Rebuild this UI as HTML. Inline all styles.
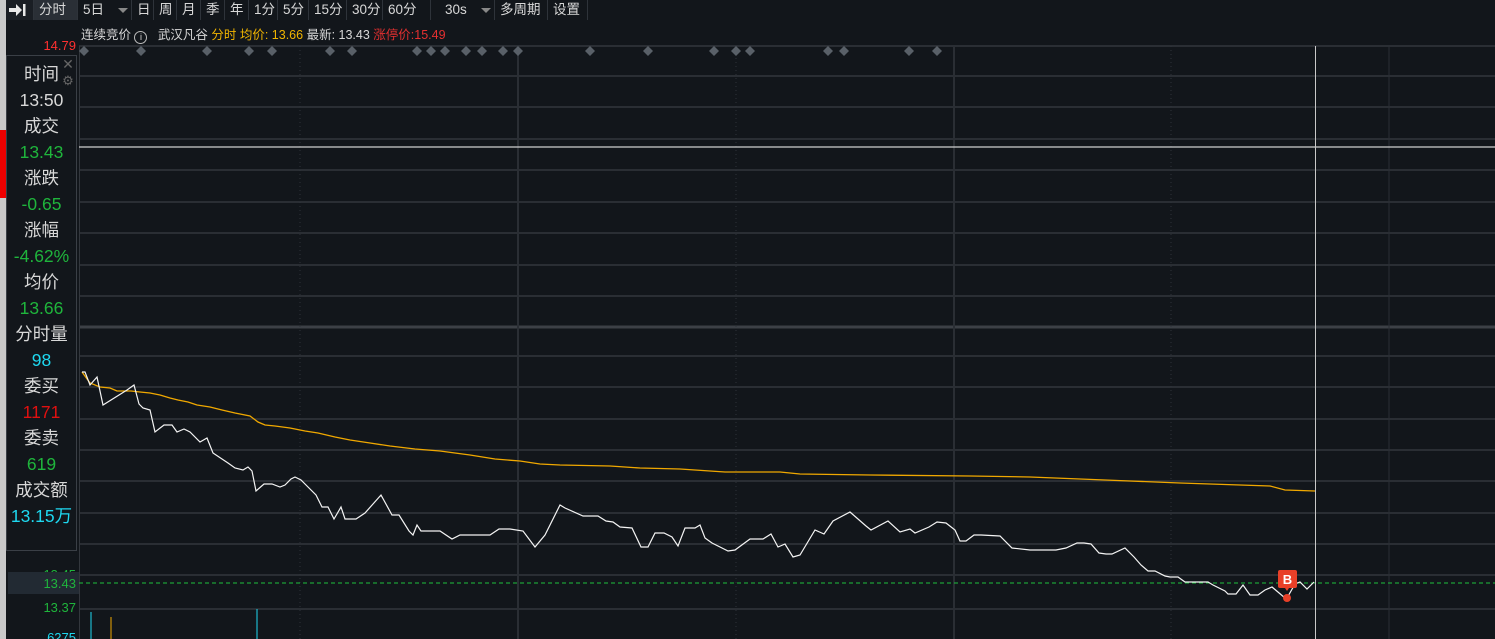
<!DOCTYPE html>
<html><head><meta charset="utf-8"><style>
*{margin:0;padding:0;box-sizing:border-box}
html,body{width:1495px;height:639px;overflow:hidden}
body{background:#12161b;position:relative;font-family:"Liberation Sans","Noto Sans CJK SC",sans-serif;color:#d8d8d8}
.gut{position:absolute;left:0;top:0;width:6px;height:639px;background:#c9c9c9}
.tb{position:absolute;left:6px;top:0;height:20px;width:1489px;background:#12161b;font-size:13.5px}
.tb span{position:absolute;top:0;height:20px;line-height:20px;border-right:1px solid #2e333a;padding-left:5px;color:#d8d8d8}
.info{position:absolute;top:24px;left:81px;font-size:12.5px;white-space:pre}
.lp{position:absolute;left:6px;top:55px;width:71px;height:496px;border:1px solid #3a3f46;background:#12161b;font-size:17.5px;text-align:center;padding-top:5px}
.lp div{height:26px;line-height:26px}
.w{color:#d8d8d8}.g{color:#1fb53c}.c{color:#1ed8f0}.r{color:#e01010}
.ax{position:absolute;font-size:13px;right:1419px;text-align:right}
</style></head><body>
<div class="gut"><div style="position:absolute;top:130px;left:0;width:6px;height:68px;background:#e00"></div></div>
<div class="tb">
<span style="left:0;width:28px;padding:0;background:#1a1e24"><svg width="22" height="20" viewBox="0 0 22 20"><path d="M3 8h7V4l6 6-6 6v-4H3z" fill="#e8e8e8"/><rect x="17" y="4" width="2.5" height="12" fill="#e8e8e8"/></svg></span>
<span style="left:28px;width:44px;background:#2a2f36">分时</span>
<span style="left:72px;width:54px">5日<b style="position:absolute;left:40px;top:8px;border:5px solid transparent;border-top:5px solid #888;border-bottom:0"></b></span>
<span style="left:126px;width:22px">日</span>
<span style="left:148px;width:23px">周</span>
<span style="left:171px;width:24px">月</span>
<span style="left:195px;width:24px">季</span>
<span style="left:219px;width:24px">年</span>
<span style="left:243px;width:29px">1分</span>
<span style="left:272px;width:31px">5分</span>
<span style="left:303px;width:38px">15分</span>
<span style="left:341px;width:36px">30分</span>
<span style="left:377px;width:48px">60分</span>
<span style="left:425px;width:64px;padding-left:14px">30s<b style="position:absolute;left:50px;top:8px;border:5px solid transparent;border-top:5px solid #888;border-bottom:0"></b></span>
<span style="left:489px;width:53px">多周期</span>
<span style="left:542px;width:40px">设置</span>
</div>
<div class="info"><span>连续竞价 </span><span style="display:inline-block;width:13px;height:13px;border:1px solid #bbb;border-radius:50%;font-size:9px;text-align:center;line-height:11px;vertical-align:-1px">i</span><span>   武汉凡谷 </span><span style="color:#f0b400">分时 均价: 13.66 </span><span>最新: 13.43 </span><span style="color:#e53030">涨停价:15.49</span></div>
<div class="ax" style="top:38px;color:#ff3030">14.79</div>
<svg style="position:absolute;left:0;top:0" width="1495" height="639">
<g stroke="#33373d" stroke-width="1.5">
<line x1="79" x2="1495" y1="46" y2="46"/><line x1="79" x2="1495" y1="76" y2="76"/><line x1="79" x2="1495" y1="107" y2="107"/><line x1="79" x2="1495" y1="139" y2="139"/><line x1="79" x2="1495" y1="170" y2="170"/><line x1="79" x2="1495" y1="202" y2="202"/><line x1="79" x2="1495" y1="233" y2="233"/><line x1="79" x2="1495" y1="265" y2="265"/><line x1="79" x2="1495" y1="296" y2="296"/><line x1="79" x2="1495" y1="356" y2="356"/><line x1="79" x2="1495" y1="387" y2="387"/><line x1="79" x2="1495" y1="419" y2="419"/><line x1="79" x2="1495" y1="450" y2="450"/><line x1="79" x2="1495" y1="481" y2="481"/><line x1="79" x2="1495" y1="513" y2="513"/><line x1="79" x2="1495" y1="544" y2="544"/><line x1="79" x2="1495" y1="575" y2="575"/><line x1="79" x2="1495" y1="609" y2="609"/>
</g>
<line x1="79" x2="1495" y1="327" y2="327" stroke="#3c4046" stroke-width="3"/>
<line x1="79.5" x2="79.5" y1="46" y2="639" stroke="#33373d"/>
<g stroke="#2a2e34" stroke-width="2"><line x1="518" x2="518" y1="46" y2="639"/><line x1="954" x2="954" y1="46" y2="639"/><line x1="1389" x2="1389" y1="46" y2="639" stroke-width="1"/></g>
<g stroke="#2e333a" stroke-dasharray="1 3"><line x1="300" x2="300" y1="46" y2="639"/><line x1="736" x2="736" y1="46" y2="639"/><line x1="1171" x2="1171" y1="46" y2="639"/></g>
<line x1="79" x2="1495" y1="147" y2="147" stroke="#d0d0d0" stroke-width="1.2"/>
<line x1="1315.5" x2="1315.5" y1="46" y2="639" stroke="#c8c8c8"/>
<g fill="#596068">
<path d="M84 46l5 5-5 5-5-5z"/><path d="M141 46l5 5-5 5-5-5z"/><path d="M207 46l5 5-5 5-5-5z"/><path d="M249 46l5 5-5 5-5-5z"/><path d="M272 46l5 5-5 5-5-5z"/><path d="M330 46l5 5-5 5-5-5z"/><path d="M352 46l5 5-5 5-5-5z"/><path d="M417 46l5 5-5 5-5-5z"/><path d="M431 46l5 5-5 5-5-5z"/><path d="M445 46l5 5-5 5-5-5z"/><path d="M466 46l5 5-5 5-5-5z"/><path d="M482 46l5 5-5 5-5-5z"/><path d="M503 46l5 5-5 5-5-5z"/><path d="M518 46l5 5-5 5-5-5z"/><path d="M590 46l5 5-5 5-5-5z"/><path d="M648 46l5 5-5 5-5-5z"/><path d="M714 46l5 5-5 5-5-5z"/><path d="M736 46l5 5-5 5-5-5z"/><path d="M750 46l5 5-5 5-5-5z"/><path d="M828 46l5 5-5 5-5-5z"/><path d="M844 46l5 5-5 5-5-5z"/><path d="M909 46l5 5-5 5-5-5z"/><path d="M937 46l5 5-5 5-5-5z"/>
</g>
<line x1="79" x2="1495" y1="583" y2="583" stroke="#1fc03c" stroke-dasharray="4 3"/>
<polyline fill="none" stroke="#f0a800" stroke-width="1.3" points="82,372 90,383 100,387 110,388 117,391 131,391 140,392 150,393 160,395 170,398 178,400 188,402 197,405 210,407 222,410 235,413 250,416 258,422 265,425 275,426 290,428 305,431 318,433 335,437 350,440 370,443 390,446 415,449 440,451 470,455 495,459 520,461 540,464 560,465 610,466 640,468 680,469 725,472 780,472 800,474 870,475 970,476 1030,477 1080,479 1130,481 1180,483 1240,485 1270,486 1285,490 1315,491"/>
<polyline fill="none" stroke="#f4f4f4" stroke-width="1.2" points="82,372 85,372 90,385 97,377 103,405 127,390 134,385 139,404 143,408 150,410 155,432 164,425 172,425 177,432 184,429 190,432 200,442 207,438 213,453 228,463 235,468 243,470 248,467 252,471 256,491 264,484 272,484 280,487 285,485 291,479 295,477 301,480 308,487 316,495 322,507 328,507 334,519 341,507 345,519 356,519 365,513 381,495 392,515 399,515 409,531 413,535 417,525 421,531 428,531 440,531 452,539 460,535 490,535 499,529 510,529 523,531 535,547 545,535 560,505 565,508 583,516 598,516 606,521 613,522 620,527 632,528 641,547 648,547 655,533 664,533 672,537 678,546 685,528 695,528 700,525 705,538 712,543 720,547 728,551 735,550 750,539 763,539 771,534 778,547 785,544 793,557 800,555 815,530 824,534 833,521 850,512 866,526 871,530 888,521 900,532 910,529 915,533 929,527 937,522 946,523 955,530 960,541 966,541 974,535 981,535 1000,536 1012,548 1030,550 1045,550 1056,550 1066,548 1077,543 1084,543 1091,544 1099,553 1106,554 1112,554 1125,548 1134,557 1141,565 1148,571 1155,571 1165,576 1170,577 1178,577 1185,582 1208,582 1213,585 1225,591 1228,594 1236,594 1243,585 1250,595 1258,595 1265,590 1272,587 1285,598 1287,598 1295,584 1300,582 1307,589 1314,582"/>
<line x1="91" x2="91" y1="612" y2="639" stroke="#1ed8f0"/>
<line x1="111" x2="111" y1="617" y2="639" stroke="#f0a800"/>
<line x1="257" x2="257" y1="609" y2="639" stroke="#1ed8f0"/>
<circle cx="1287" cy="598" r="4" fill="#e84028"/>
<rect x="1278" y="570" width="19" height="18" rx="2" fill="#e84028"/>
<path d="M1285 588l2 3 2-3z" fill="#e84028"/>
<text x="1287.5" y="584" fill="#fff" font-size="13" font-weight="bold" text-anchor="middle" font-family="Liberation Sans">B</text>
</svg>
<div class="lp">
<div class="w">时间</div><div class="w">13:50</div><div class="w">成交</div><div class="g">13.43</div><div class="w">涨跌</div><div class="g">-0.65</div><div class="w">涨幅</div><div class="g">-4.62%</div><div class="w">均价</div><div class="g">13.66</div><div class="w">分时量</div><div class="c">98</div><div class="w">委买</div><div class="r">1171</div><div class="w">委卖</div><div class="g">619</div><div class="w">成交额</div><div class="c">13.15万</div>
<span style="position:absolute;right:0;top:0;width:16px;height:16px;color:#666;font-size:14px;line-height:16px">✕</span>
<span style="position:absolute;right:0;top:17px;width:16px;height:16px;color:#666;font-size:13px;line-height:16px">⚙</span>
</div>
<div class="ax" style="top:567px;color:#1fb53c">13.45</div>
<div style="position:absolute;left:8px;top:572px;width:71px;height:22px;background:#222a33"></div>
<div class="ax" style="top:576px;color:#1fb53c">13.43</div>
<div class="ax" style="top:600px;color:#1fb53c">13.37</div>
<div class="ax" style="top:630px;color:#1ed8f0">6275</div>
</body></html>
